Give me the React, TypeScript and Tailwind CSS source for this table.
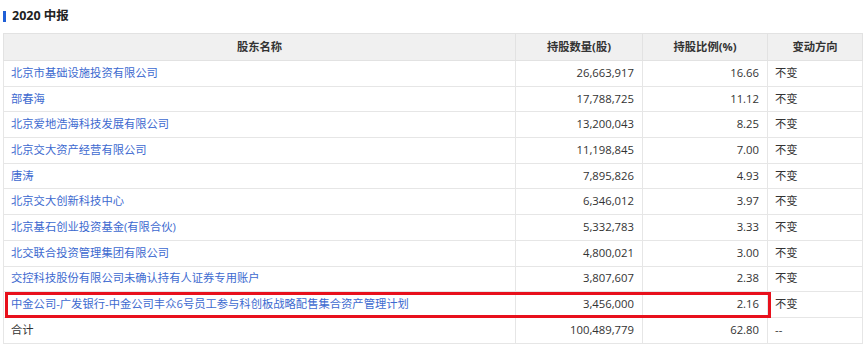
const ROWS = [
  { name: "北京市基础设施投资有限公司", qty: "26,663,917", pct: "16.66", chg: "不变" },
  { name: "部春海", qty: "17,788,725", pct: "11.12", chg: "不变" },
  { name: "北京爱地浩海科技发展有限公司", qty: "13,200,043", pct: "8.25", chg: "不变" },
  { name: "北京交大资产经营有限公司", qty: "11,198,845", pct: "7.00", chg: "不变" },
  { name: "唐涛", qty: "7,895,826", pct: "4.93", chg: "不变" },
  { name: "北京交大创新科技中心", qty: "6,346,012", pct: "3.97", chg: "不变" },
  { name: "北京基石创业投资基金(有限合伙)", qty: "5,332,783", pct: "3.33", chg: "不变" },
  { name: "北交联合投资管理集团有限公司", qty: "4,800,021", pct: "3.00", chg: "不变" },
  { name: "交控科技股份有限公司未确认持有人证券专用账户", qty: "3,807,607", pct: "2.38", chg: "不变" },
  { name: "中金公司-广发银行-中金公司丰众6号员工参与科创板战略配售集合资产管理计划", qty: "3,456,000", pct: "2.16", chg: "不变" },
];

export default function App() {
  return (
    <div className="w-[865px] h-[348px] bg-white text-[#333] text-[11.3px] font-['Open_Sans','Noto_Sans_CJK_SC',sans-serif] overflow-hidden">
      <div className="flex items-center h-[33px] pl-[3px] pb-[1px]">
        <span className="w-[3px] h-[11px] bg-[#1f5fd6] mr-[6px]" />
        <span className="text-[12.5px] font-bold text-[#222]">2020 中报</span>
      </div>
      <div className="relative ml-[3px] w-[859px]">
        <table className="w-full border-collapse table-fixed">
          <colgroup>
            <col className="w-[512px]" />
            <col className="w-[127px]" />
            <col className="w-[125px]" />
            <col className="w-[95px]" />
          </colgroup>
          <thead>
            <tr className="h-[27px] bg-[#f0f0f0] text-[#333]">
              <th className="border border-[#e2e2e2] text-center font-bold">股东名称</th>
              <th className="border border-[#e2e2e2] text-center font-bold">持股数量(股)</th>
              <th className="border border-[#e2e2e2] text-center font-bold">持股比例(%)</th>
              <th className="border border-[#e2e2e2] text-center font-bold">变动方向</th>
            </tr>
          </thead>
          <tbody>
            {ROWS.map((r) => (
              <tr key={r.name} className="h-[25.7px]">
                <td className="border border-[#e6e6e6] pl-[7px] text-[#3d6ad0] whitespace-nowrap">{r.name}</td>
                <td className="border border-[#e6e6e6] pr-[8px] text-right">{r.qty}</td>
                <td className="border border-[#e6e6e6] pr-[8px] text-right">{r.pct}</td>
                <td className="border border-[#e6e6e6] pl-[7px]">{r.chg}</td>
              </tr>
            ))}
            <tr className="h-[25.7px]">
              <td className="border border-[#e6e6e6] pl-[7px]">合计</td>
              <td className="border border-[#e6e6e6] pr-[8px] text-right">100,489,779</td>
              <td className="border border-[#e6e6e6] pr-[8px] text-right">62.80</td>
              <td className="border border-[#e6e6e6] pl-[7px]">--</td>
            </tr>
          </tbody>
        </table>
        <div className="absolute left-[2px] top-[259px] w-[766px] h-[26px] border-[3px] border-[#e8101c] pointer-events-none" />
      </div>
    </div>
  );
}
